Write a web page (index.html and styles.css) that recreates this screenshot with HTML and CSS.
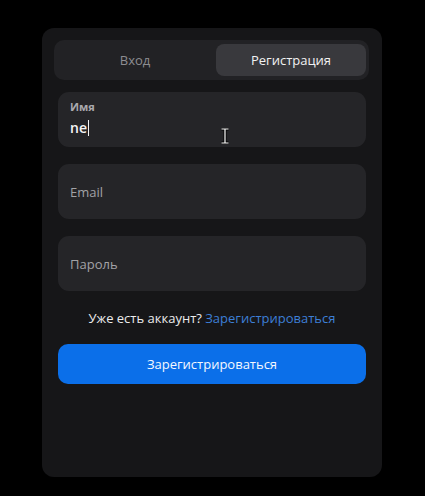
FILE: index.html
```html
<!DOCTYPE html>
<html lang="ru">
<head>
<meta charset="utf-8">
<link rel="stylesheet" href="styles.css">
</head>
<body>
<div class="card">
  <div class="tabs">
    <div class="tab">Вход</div>
    <div class="tab active">Регистрация</div>
  </div>
  <div class="form">
    <div class="field filled">
      <div class="label">Имя</div>
      <div class="value">ne<span class="caret"></span></div>
      <svg class="ibeam" width="8" height="16" viewBox="0 0 8 16"><path d="M0.5 1H7.5M4 1V15M0.5 15H7.5" stroke="#000" stroke-width="3"/><path d="M0.5 1H7.5M4 1V15M0.5 15H7.5" stroke="#fff" stroke-width="1.2"/></svg>
    </div>
    <div class="field"><span class="placeholder">Email</span></div>
    <div class="field"><span class="placeholder">Пароль</span></div>
    <p class="switch">Уже есть аккаунт? <span class="link">Зарегистрироваться</span></p>
    <button class="submit">Зарегистрироваться</button>
  </div>
</div>
</body>
</html>
```
FILE: styles.css
```css
* { box-sizing: border-box; }
html, body { margin: 0; padding: 0; }
body {
  background: #000;
  width: 425px;
  height: 496px;
  font-family: "Open Sans", "Noto Sans", sans-serif;
  padding: 28px 0 0 42px;
}
.card {
  width: 340px;
  height: 449px;
  background: #161618;
  border-radius: 12px;
  padding: 12px 13px 0 12px;
}
.tabs {
  height: 40px;
  background: #222225;
  border-radius: 10px;
  padding: 4px 3px 4px 4px;
  display: flex;
  gap: 4px;
}
.tab {
  flex: 1;
  display: flex;
  align-items: center;
  justify-content: center;
  font-size: 13px;
  color: #8d8d92;
  border-radius: 8px;
}
.tab.active {
  flex: 0 0 150px;
  background: #39393d;
  color: #f2f2f2;
}
.form {
  padding: 12px 3px 0 4px;
  display: flex;
  flex-direction: column;
}
.field {
  position: relative;
  height: 55px;
  background: #252528;
  border-radius: 11px;
  margin-bottom: 17px;
  padding: 0 12px;
  display: flex;
  align-items: center;
}
.field.filled {
  flex-direction: column;
  align-items: flex-start;
  justify-content: flex-start;
  padding-top: 8px;
}
.label {
  font-size: 11px;
  font-weight: 700;
  color: #a9a9ad;
  line-height: 14px;
}
.value {
  margin-top: 3px;
  font-size: 14px;
  font-weight: 600;
  color: #f4f4f4;
  line-height: 22px;
  display: flex;
  align-items: center;
}
.caret {
  display: inline-block;
  width: 1px;
  height: 16px;
  background: #f4f4f4;
  margin-left: 1px;
}
.ibeam {
  position: absolute;
  left: 163px;
  top: 36px;
}
.placeholder {
  font-size: 13px;
  color: #a2a2a6;
}
.switch {
  margin: 1px 0 0;
  text-align: center;
  font-size: 13px;
  color: #ececec;
  line-height: 18px;
}
.link { color: #3d7fd6; }
.submit {
  margin-top: 17px;
  height: 40px;
  border: none;
  border-radius: 10px;
  background: #0b6fe9;
  color: #f4f8ff;
  font-family: inherit;
  font-size: 13px;
}
```
